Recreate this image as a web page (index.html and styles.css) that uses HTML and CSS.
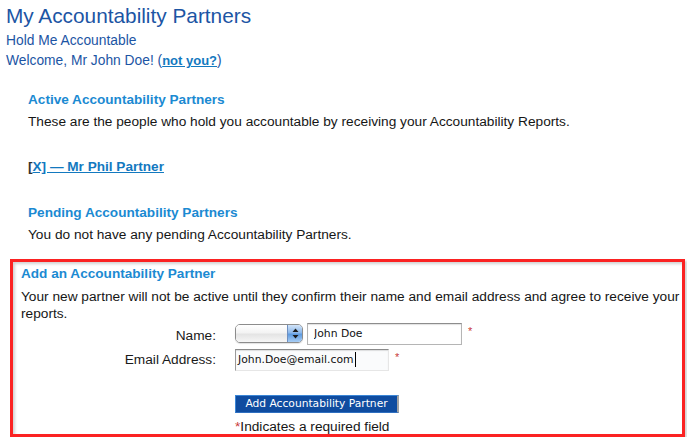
FILE: index.html
```html
<!DOCTYPE html>
<html lang="en">
<head>
<meta charset="utf-8">
<title>My Accountability Partners</title>
<link rel="stylesheet" href="styles.css">
</head>
<body>
<header class="top">
  <h1 class="title">My Accountability Partners</h1>
  <div class="sub sub-first">Hold Me Accountable</div>
  <div class="sub">Welcome, Mr John Doe! (<a href="#" class="strong-link">not you?</a>)</div>
</header>

<section class="sec sec-active">
  <h2 class="sec-h">Active Accountability Partners</h2>
  <p class="sec-p">These are the people who hold you accountable by receiving your Accountability Reports.</p>
  <p class="partner">[<a href="#" class="partner-link">X] — Mr Phil Partner</a></p>
</section>

<section class="sec sec-pending">
  <h2 class="sec-h">Pending Accountability Partners</h2>
  <p class="sec-p">You do not have any pending Accountability Partners.</p>
</section>

<section class="add-box">
  <h2 class="sec-h">Add an Accountability Partner</h2>
  <p class="sec-p">Your new partner will not be active until they confirm their name and email address and agree to receive your reports.</p>
  <form class="form">
    <div class="row">
      <label class="lbl lbl-name">Name:</label>
      <div class="ctrls">
        <div class="popup">
          <span class="popup-body"></span>
          <span class="popup-arrows">
            <svg width="7" height="11" viewBox="0 0 7 11"><path d="M3.5 0.5 L6.5 4 L0.5 4 Z M3.5 10.5 L6.5 7 L0.5 7 Z" fill="#1b1b1b"/></svg>
          </span>
        </div>
        <input class="field field-name" type="text" value="John Doe">
        <span class="req">*</span>
      </div>
    </div>
    <div class="row row-email">
      <label class="lbl">Email Address:</label>
      <div class="ctrls">
        <div class="field field-email"><span>John.Doe@email.com</span><span class="caret"></span></div>
        <span class="req">*</span>
      </div>
    </div>
    <div class="actions">
      <button type="button" class="btn">Add Accountability Partner</button>
      <div class="note"><span class="req-inline">*</span>Indicates a required field</div>
    </div>
  </form>
</section>
</body>
</html>
```

FILE: styles.css
```css
* { box-sizing: border-box; }

body {
  margin: 0;
  padding: 4px 0 0 0;
  font-family: "Liberation Sans", Arial, Helvetica, sans-serif;
  font-size: 13.7px;
  color: #161616;
  background: #fff;
}

.top { padding-left: 6px; }

.title {
  margin: 0;
  font-size: 20.8px;
  line-height: 24px;
  font-weight: normal;
  color: #1c55a4;
}

.sub {
  line-height: 20.5px;
  color: #1c55a4;
  font-size: 13.8px;
}
.sub-first { margin-top: 2.5px; }

.strong-link {
  font-weight: bold;
  font-size: 13px;
  color: #1379bf;
  text-decoration: underline;
}

.sec { padding-left: 28px; }
.sec-active { padding-top: 19px; }
.sec-pending { padding-top: 29px; }

.sec-h {
  margin: 0;
  font-size: 13.6px;
  line-height: 17px;
  font-weight: bold;
  color: #1b8ad2;
}

.sec-p {
  margin: 5px 0 0 0;
  line-height: 17px;
}

.partner {
  margin: 28.5px 0 0 0;
  line-height: 17px;
  font-weight: bold;
  font-size: 13.6px;
  color: #333;
}
.partner-link {
  color: #1379bf;
  text-decoration: underline;
}

.add-box {
  margin: 16px 0 0 10px;
  width: 675px;
  height: 178px;
  border: 3px solid #fb2222;
  padding: 3px 0 0 8px;
  box-shadow: 2px 2px 2px rgba(0,0,0,0.18), inset 2px 2px 3px rgba(0,0,0,0.18);
}
.add-box .sec-p { margin-top: 5.5px; }

.form { margin-top: 1px; }

.row {
  display: grid;
  grid-template-columns: 195px 1fr;
  column-gap: 19px;
  align-items: center;
  height: 22px;
}
.row-email { margin-top: 4px; }

.lbl {
  text-align: right;
  color: #1a1a1a;
}
.lbl-name { padding-top: 4px; }

.ctrls {
  display: flex;
  align-items: center;
}

.popup {
  display: flex;
  width: 68px;
  height: 19px;
  border: 1px solid #8c8c8c;
  border-radius: 5px;
  overflow: hidden;
  box-shadow: 0 1px 1px rgba(0,0,0,0.12);
}
.popup-body {
  flex: 1;
  background: linear-gradient(#ffffff, #f3f3f3 45%, #e4e4e4 55%, #f6f6f6);
}
.popup-arrows {
  width: 15px;
  display: flex;
  align-items: center;
  justify-content: center;
  border-left: 1px solid #6f8fbf;
  background: linear-gradient(#d2e4f8, #8bb7ea 45%, #5e9be0 55%, #a8cdf4);
}

.field {
  font-family: "DejaVu Sans", "Liberation Sans", sans-serif;
  font-size: 10.8px;
  color: #111;
  height: 22px;
  background: #fff;
  border: 1px solid #b5b5b5;
  border-top-color: #8d8d8d;
  box-shadow: inset 0 1px 1px rgba(0,0,0,0.12);
  margin: 0;
  outline: none;
}
.field-name {
  width: 155px;
  margin-left: 4px;
  padding: 0 0 0 6px;
}
.field-email {
  width: 154px;
  display: flex;
  align-items: center;
  padding-left: 2px;
  background: #fafbfc;
  border-color: #8a8a8a #e6e6e6 #e6e6e6 #9a9a9a;
}
.caret {
  display: inline-block;
  width: 1px;
  height: 15px;
  background: #000;
  margin-left: 1px;
}

.req {
  color: #c83a3a;
  font-size: 11px;
  align-self: flex-start;
  margin: 2px 0 0 6px;
}

.actions {
  margin: 24px 0 0 214px;
}

.btn {
  display: block;
  width: 164px;
  height: 18.5px;
  padding: 0;
  margin: 0;
  font-family: "DejaVu Sans", "Liberation Sans", sans-serif;
  font-size: 10.7px;
  color: #fff;
  background: #0f4ca0;
  border: 1px solid #3b86d6;
  border-right: 2px solid #a3a3a3;
  border-bottom-color: #2f6fc0;
}

.note {
  margin-top: 7px;
  line-height: 14px;
  color: #161616;
}
.req-inline { color: #c83a3a; }
```
